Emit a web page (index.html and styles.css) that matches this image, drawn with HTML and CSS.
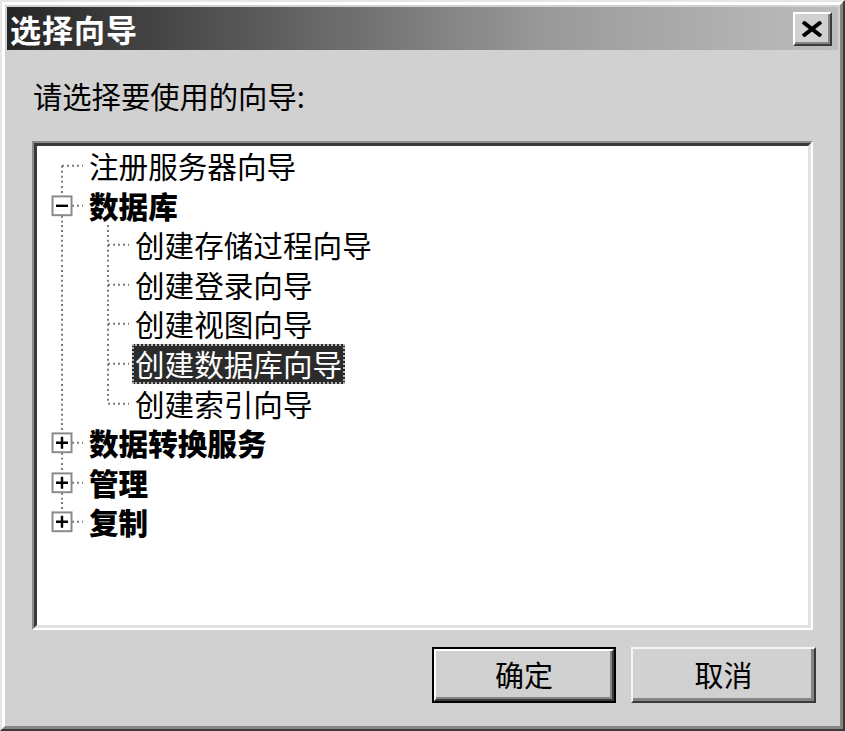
FILE: index.html
```html
<!DOCTYPE html>
<html lang="zh-CN">
<head>
<meta charset="utf-8">
<title>选择向导</title>
<link rel="stylesheet" href="styles.css">
</head>
<body>
<div class="window">
  <div class="frame">
    <div class="titlebar">
      <span class="title">选择向导</span>
      <button class="close" aria-label="关闭">
        <svg width="22" height="16" viewBox="0 0 22 16"><path d="M2 1L20 15M20 1L2 15" stroke="#000" stroke-width="4" fill="none"/></svg>
      </button>
    </div>
    <div class="body">
      <div class="prompt">请选择要使用的向导:</div>
      <div class="tree-outer">
        <div class="tree">
          <div class="row">
            <svg class="cell" viewBox="0 0 46 40" preserveAspectRatio="none"><path class="dot" d="M25 20V40M25 20H46"/></svg>
            <span class="label">注册服务器向导</span>
          </div>
          <div class="row">
            <svg class="cell" viewBox="0 0 46 40" preserveAspectRatio="none"><path class="dot" d="M25 0V40M25 20H46"/><rect class="box" x="15.5" y="10.5" width="19" height="19"/><path class="sign" d="M19 20H31"/></svg>
            <span class="label bold">数据库</span>
          </div>
          <div class="row">
            <svg class="cell" viewBox="0 0 46 40" preserveAspectRatio="none"><path class="dot" d="M25 0V40"/></svg>
            <svg class="cell" viewBox="0 0 46 40" preserveAspectRatio="none"><path class="dot" d="M25 0V40M25 20H46"/></svg>
            <span class="label">创建存储过程向导</span>
          </div>
          <div class="row">
            <svg class="cell" viewBox="0 0 46 40" preserveAspectRatio="none"><path class="dot" d="M25 0V40"/></svg>
            <svg class="cell" viewBox="0 0 46 40" preserveAspectRatio="none"><path class="dot" d="M25 0V40M25 20H46"/></svg>
            <span class="label">创建登录向导</span>
          </div>
          <div class="row">
            <svg class="cell" viewBox="0 0 46 40" preserveAspectRatio="none"><path class="dot" d="M25 0V40"/></svg>
            <svg class="cell" viewBox="0 0 46 40" preserveAspectRatio="none"><path class="dot" d="M25 0V40M25 20H46"/></svg>
            <span class="label">创建视图向导</span>
          </div>
          <div class="row">
            <svg class="cell" viewBox="0 0 46 40" preserveAspectRatio="none"><path class="dot" d="M25 0V40"/></svg>
            <svg class="cell" viewBox="0 0 46 40" preserveAspectRatio="none"><path class="dot" d="M25 0V40M25 20H46"/></svg>
            <span class="label selected">创建数据库向导</span>
          </div>
          <div class="row">
            <svg class="cell" viewBox="0 0 46 40" preserveAspectRatio="none"><path class="dot" d="M25 0V40"/></svg>
            <svg class="cell" viewBox="0 0 46 40" preserveAspectRatio="none"><path class="dot" d="M25 0V20M25 20H46"/></svg>
            <span class="label">创建索引向导</span>
          </div>
          <div class="row">
            <svg class="cell" viewBox="0 0 46 40" preserveAspectRatio="none"><path class="dot" d="M25 0V40M25 20H46"/><rect class="box" x="15.5" y="10.5" width="19" height="19"/><path class="sign" d="M19 20H31M25 14V26"/></svg>
            <span class="label bold">数据转换服务</span>
          </div>
          <div class="row">
            <svg class="cell" viewBox="0 0 46 40" preserveAspectRatio="none"><path class="dot" d="M25 0V40M25 20H46"/><rect class="box" x="15.5" y="10.5" width="19" height="19"/><path class="sign" d="M19 20H31M25 14V26"/></svg>
            <span class="label bold">管理</span>
          </div>
          <div class="row">
            <svg class="cell" viewBox="0 0 46 40" preserveAspectRatio="none"><path class="dot" d="M25 0V20M25 20H46"/><rect class="box" x="15.5" y="10.5" width="19" height="19"/><path class="sign" d="M19 20H31M25 14V26"/></svg>
            <span class="label bold">复制</span>
          </div>
        </div>
      </div>
      <div class="buttons">
        <button class="btn default"><span class="btn-in">确定</span></button>
        <button class="btn"><span class="btn-in">取消</span></button>
      </div>
    </div>
  </div>
</div>
</body>
</html>
```

FILE: styles.css
```css
html, body {
  margin: 0;
  padding: 0;
  background: #d1d1d1;
}

body {
  font-family: "Noto Sans CJK SC", "Noto Sans", sans-serif;
  color: #000;
}

.window {
  width: 845px;
  height: 731px;
  box-sizing: border-box;
  border: 2px solid;
  border-color: #e6e6e6 #3a3a3a #3a3a3a #e6e6e6;
  background: #d1d1d1;
}

.frame {
  height: 100%;
  box-sizing: border-box;
  border: 3px solid;
  border-color: #ffffff #858585 #858585 #ffffff;
  padding: 2px;
  display: flex;
  flex-direction: column;
}

.titlebar {
  height: 43px;
  flex: none;
  display: flex;
  align-items: flex-start;
  justify-content: space-between;
  background: linear-gradient(to right, #252525 0%, #5a5a5a 30%, #9a9a9a 65%, #bdbdbd 100%);
}

.title {
  color: #fff;
  font-weight: 700;
  font-size: 31px;
  line-height: 43px;
  padding-left: 3px;
  letter-spacing: 1px;
}

.close {
  margin: 5px 6px 0 0;
  width: 39px;
  height: 34px;
  padding: 0;
  box-sizing: border-box;
  background: #d1d1d1;
  border: 2px solid;
  border-color: #ffffff #3a3a3a #3a3a3a #ffffff;
  box-shadow: inset -2px -2px 0 #858585;
  display: flex;
  align-items: center;
  justify-content: center;
}

.close svg {
  display: block;
  margin: -1px 0 0 -1px;
}

.body {
  flex: 1;
  display: flex;
  flex-direction: column;
  padding: 25px 22px 20px 25px;
}

.prompt {
  height: 40px;
  line-height: 40px;
  font-size: 29.3px;
  padding-left: 1px;
  flex: none;
}

.tree-outer {
  margin-top: 26px;
  margin-right: 3px;
  height: 489px;
  box-sizing: border-box;
  border: 2px solid;
  border-color: #8a8a8a #ffffff #ffffff #8a8a8a;
  flex: none;
}

.tree {
  height: 100%;
  box-sizing: border-box;
  border: 3px solid;
  border-color: #3a3a3a #e2e2e2 #e2e2e2 #3a3a3a;
  background: #fff;
  overflow: hidden;
}

.row {
  height: 39.6px;
  display: flex;
  align-items: stretch;
}

.cell {
  width: 46px;
  height: 100%;
  flex: none;
  display: block;
}

.dot {
  fill: none;
  stroke: #7a7a7a;
  stroke-width: 2;
  stroke-dasharray: 2 3;
}

.box {
  fill: #fff;
  stroke: #8a8a8a;
  stroke-width: 2;
}

.sign {
  fill: none;
  stroke: #000;
  stroke-width: 2.4;
}

.label {
  margin-left: 3px;
  padding: 0 3px;
  font-size: 29.6px;
  line-height: 39.6px;
  white-space: nowrap;
  box-sizing: border-box;
}

.label.bold {
  font-weight: 900;
}

.label.selected {
  background: #2b2b2b;
  color: #fff;
  outline: 2px dotted #b5b5b5;
  outline-offset: -2px;
}

.buttons {
  margin-top: 17px;
  display: flex;
  justify-content: flex-end;
  gap: 15px;
  flex: none;
}

.btn {
  width: 185px;
  height: 56px;
  padding: 0;
  box-sizing: border-box;
  font-family: "Noto Sans CJK SC", "Noto Sans", sans-serif;
  font-size: 29px;
  color: #000;
  background: #d1d1d1;
  border: 2px solid;
  border-color: #f4f4f4 #3a3a3a #3a3a3a #f4f4f4;
  box-shadow: inset -3px -3px 0 #858585;
  display: flex;
  align-items: stretch;
}

.btn.default {
  width: 184px;
  border: 2px solid #000;
  box-shadow: none;
}

.btn-in {
  flex: 1;
  display: flex;
  align-items: center;
  justify-content: center;
  line-height: 1;
  padding-bottom: 2px;
}

.btn.default .btn-in {
  border: 2px solid;
  border-color: #ffffff #3a3a3a #3a3a3a #ffffff;
  box-shadow: inset -2px -2px 0 #858585;
}
```
